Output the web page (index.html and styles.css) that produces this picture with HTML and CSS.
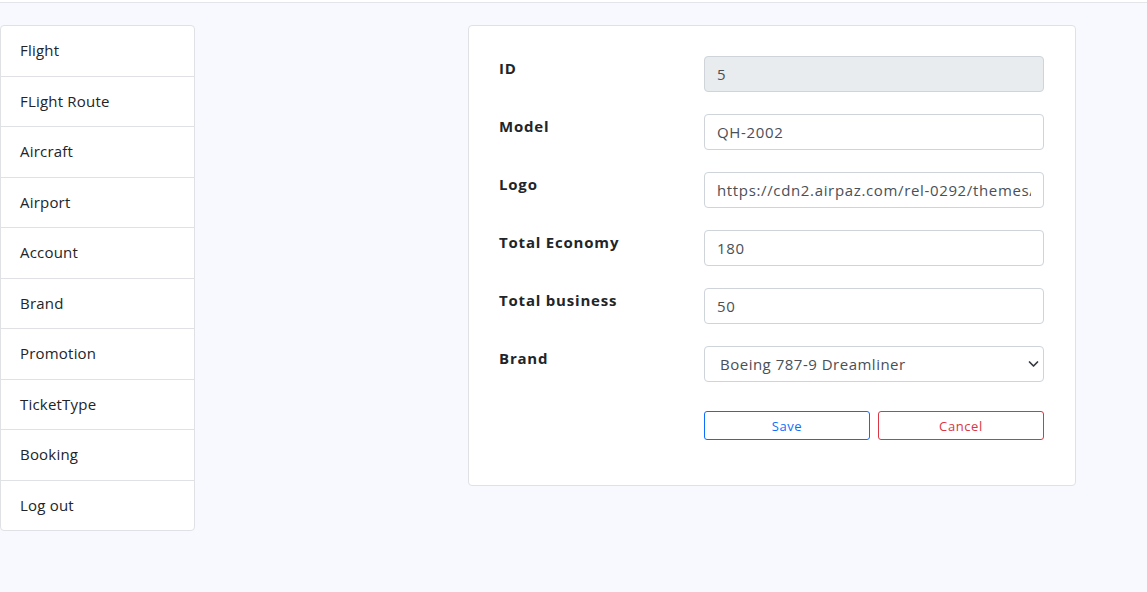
FILE: index.html
```html
<!DOCTYPE html>
<html>
<head>
<meta charset="utf-8">
<link rel="stylesheet" href="styles.css">
</head>
<body>
<div class="topbar"></div>
<div class="layout">
  <ul class="menu">
    <li class="menu-item">Flight</li>
    <li class="menu-item">FLight Route</li>
    <li class="menu-item">Aircraft</li>
    <li class="menu-item">Airport</li>
    <li class="menu-item">Account</li>
    <li class="menu-item">Brand</li>
    <li class="menu-item">Promotion</li>
    <li class="menu-item">TicketType</li>
    <li class="menu-item">Booking</li>
    <li class="menu-item">Log out</li>
  </ul>
  <div class="card">
    <div class="row">
      <label class="label">ID</label>
      <input class="field field-disabled" value="5" disabled>
    </div>
    <div class="row">
      <label class="label">Model</label>
      <input class="field" value="QH-2002">
    </div>
    <div class="row">
      <label class="label">Logo</label>
      <input class="field" value="https://cdn2.airpaz.com/rel-0292/themes/airline/logo.png">
    </div>
    <div class="row">
      <label class="label">Total Economy</label>
      <input class="field" value="180">
    </div>
    <div class="row">
      <label class="label">Total business</label>
      <input class="field" value="50">
    </div>
    <div class="row">
      <label class="label">Brand</label>
      <div class="select">
        <span class="select-text">Boeing 787-9 Dreamliner</span>
        <svg class="chev" width="11" height="8" viewBox="0 0 16 12"><path d="M2 3l6 6 6-6" fill="none" stroke="#343a40" stroke-width="2.6" stroke-linecap="round" stroke-linejoin="round"/></svg>
      </div>
    </div>
    <div class="actions">
      <button class="btn btn-save">Save</button>
      <button class="btn btn-cancel">Cancel</button>
    </div>
  </div>
</div>
</body>
</html>
```
FILE: styles.css
```css
* { box-sizing: border-box; }
html, body { margin: 0; padding: 0; }
body {
  background: #f8f9fe;
  font-family: "Open Sans", "Noto Sans", sans-serif;
  color: #212529;
  width: 1147px;
  height: 592px;
  overflow: hidden;
}
.topbar {
  height: 3px;
  background: #ffffff;
  border-bottom: 1px solid #e3e5e9;
}
.layout {
  display: flex;
  align-items: flex-start;
  padding-top: 22px;
}
.menu {
  list-style: none;
  margin: 0;
  padding: 0;
  width: 195px;
  background: #fff;
  border: 1px solid #dfe1e5;
  border-radius: 4px;
}
.menu-item {
  padding: 12px 19px;
  font-size: 15px;
  line-height: 25.5px;
  border-top: 1px solid #dfe1e5;
  color: #212529;
  letter-spacing: 0.2px;
}
.menu-item:first-child { border-top: 0; }
.card {
  margin-left: 273px;
  width: 608px;
  background: #fff;
  border: 1px solid #dfe1e5;
  border-radius: 4px;
  padding: 30px 31px 45px 30px;
  display: flex;
  flex-direction: column;
  gap: 22px;
}
.row {
  display: flex;
  align-items: flex-start;
}
.label {
  width: 205px;
  font-weight: 700;
  font-size: 15px;
  line-height: 22px;
  padding-top: 1px;
  color: #212529;
  letter-spacing: 0.8px;
}
.field, .select {
  width: 340px;
  height: 36px;
  border: 1px solid #ced4da;
  border-radius: 4px;
  background: #fff;
  font-family: inherit;
  font-size: 15px;
  color: #495057;
  padding: 0 12px;
  outline: none;
  letter-spacing: 0.65px;
}
.field-disabled { background: #e9ecef; }
.select {
  display: flex;
  align-items: center;
  justify-content: space-between;
  padding: 0 4px 0 15px;
  letter-spacing: 0.5px;
}
.chev { display: block; }
.actions {
  display: flex;
  gap: 8px;
  padding-left: 205px;
  margin-top: 7px;
}
.btn {
  width: 166px;
  height: 29px;
  background: #fff;
  border: 1px solid;
  border-radius: 3px;
  font-family: inherit;
  font-size: 13px;
  padding: 0;
  letter-spacing: 0.6px;
}
.btn-save { border-color: #0d6efd; color: #0d6efd; }
.btn-cancel { border-color: #dc3545; color: #dc3545; }
```
